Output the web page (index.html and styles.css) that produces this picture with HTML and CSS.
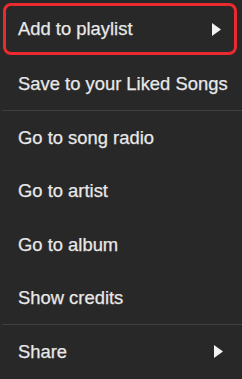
FILE: index.html
```html
<!DOCTYPE html>
<html>
<head>
<meta charset="utf-8">
<link rel="stylesheet" href="styles.css">
</head>
<body>
<ul class="menu">
  <li class="item item-active">
    <span class="label">Add to playlist</span>
    <svg class="caret" width="9" height="13" viewBox="0 0 9 13"><polygon points="0,0 9,6.5 0,13" fill="#f2f2f2"/></svg>
  </li>
  <li class="item item-sep"><span class="label">Save to your Liked Songs</span></li>
  <li class="item"><span class="label">Go to song radio</span></li>
  <li class="item"><span class="label">Go to artist</span></li>
  <li class="item"><span class="label">Go to album</span></li>
  <li class="item item-sep"><span class="label">Show credits</span></li>
  <li class="item">
    <span class="label">Share</span>
    <svg class="caret" width="9" height="13" viewBox="0 0 9 13"><polygon points="0,0 9,6.5 0,13" fill="#f2f2f2"/></svg>
  </li>
</ul>
</body>
</html>
```
FILE: styles.css
```css
html, body {
  margin: 0;
  padding: 0;
  background: #282828;
  height: 100%;
}
.menu {
  list-style: none;
  margin: 0;
  padding: 4px 0 0 0;
  font-family: "Liberation Sans", Arial, sans-serif;
  font-size: 18.4px;
  color: #e8e8e8;
}
.item {
  box-sizing: border-box;
  height: 53.5px;
  display: flex;
  align-items: center;
  justify-content: space-between;
  padding: 0 19px 0 18px;
}
.item-active {
  height: 52px;
  margin: -1px 5px 2.5px 3px;
  padding: 0 13px 0 12px;
  border: 3.5px solid #ea2a2f;
  border-radius: 8px;
}
.item-sep {
  border-bottom: 1.5px solid #3f3f3f;
  margin: 0 0 0 2px;
  padding-left: 16px;
}
.label {
  white-space: nowrap;
  -webkit-text-stroke: 0.25px #e8e8e8;
}
.caret {
  display: block;
}
```
